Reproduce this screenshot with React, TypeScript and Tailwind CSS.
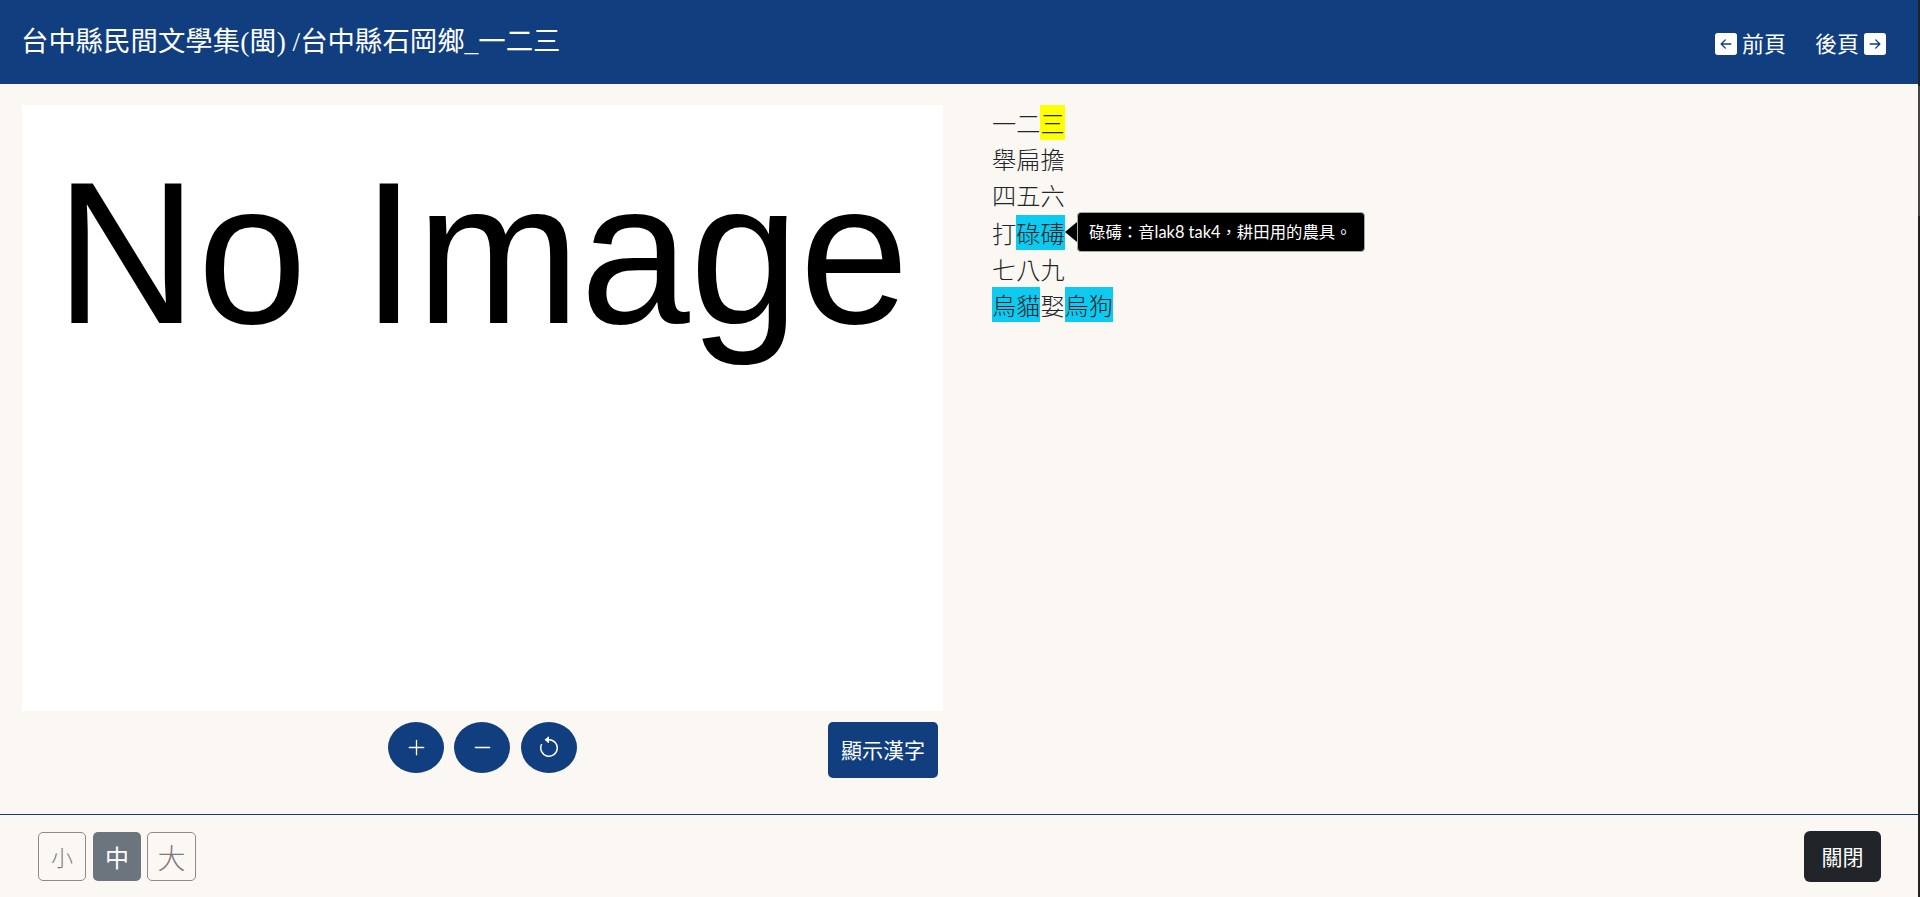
import { BsArrowCounterclockwise, BsArrowLeftSquareFill, BsArrowRightSquareFill, BsDashLg, BsPlusLg } from "react-icons/bs";

const lines = [
  [{ t: "一二" }, { t: "三", c: "bg-[#ffff00]" }],
  [{ t: "舉扁擔" }],
  [{ t: "四五六" }],
  [{ t: "打" }, { t: "碌碡", c: "bg-[#0dcaf0]" }],
  [{ t: "七八九" }],
  [{ t: "烏貓", c: "bg-[#0dcaf0]" }, { t: "娶" }, { t: "烏狗", c: "bg-[#0dcaf0]" }],
];

export default function App() {
  return (
    <div className="flex h-[897px] w-full overflow-hidden bg-[#fbf8f3] font-['Noto_Sans_CJK_TC',serif] text-[#212529]">
      <div className="flex min-w-0 flex-1 flex-col">
        {/* header */}
        <div className="flex h-[84px] shrink-0 items-center justify-between bg-[#113e7f] pl-[21px] pr-[32px] text-white">
          <h1 className="font-['Liberation_Serif','Noto_Sans_CJK_TC',serif] text-[27.4px] leading-[1.2] font-normal">
            台中縣民間文學集(閩) /台中縣石岡鄉_一二三
          </h1>
          <div className="flex items-center gap-[29px] pt-[4px] text-[22px] font-normal">
            <a className="flex items-center gap-[5px]">
              <BsArrowLeftSquareFill size={22} />
              <span className="pb-[3px]">前頁</span>
            </a>
            <a className="flex items-center gap-[5px]">
              <span className="pb-[3px]">後頁</span>
              <BsArrowRightSquareFill size={22} />
            </a>
          </div>
        </div>

        {/* body */}
        <div className="flex min-h-0 flex-1">
          <div className="ml-[22px] w-[921px] shrink-0 pt-[21px]">
            <div className="flex h-[606px] justify-center overflow-hidden bg-white pt-[46px]">
              <span className="scale-x-[0.97] whitespace-nowrap font-['Liberation_Sans',sans-serif] text-[203px] leading-none text-black">
                No Image
              </span>
            </div>
            <div className="mt-[11px] grid grid-cols-[1fr_auto_1fr] items-start">
              <div />
              <div className="flex gap-[10px]">
                <button className="flex h-[51px] w-[56px] items-center justify-center rounded-[50%] bg-[#113e7f] text-white">
                  <BsPlusLg size={21} />
                </button>
                <button className="flex h-[51px] w-[56px] items-center justify-center rounded-[50%] bg-[#113e7f] text-white">
                  <BsDashLg size={21} />
                </button>
                <button className="ml-[1px] flex h-[51px] w-[56px] items-center justify-center rounded-[50%] bg-[#113e7f] text-white">
                  <BsArrowCounterclockwise size={24} />
                </button>
              </div>
              <div className="flex justify-end pr-[5px]">
                <button className="h-[56px] w-[110px] rounded-[5px] bg-[#113e7f] text-[21px] font-normal text-white">顯示漢字</button>
              </div>
            </div>
          </div>

          <div className="ml-[49px] pt-[21px] text-[24.2px] leading-[36px] font-light">
            {lines.map((line, i) => (
              <div key={i} className={i === 3 ? "relative mt-[2px]" : ""}>
                {line.map((s, j) => (
                  <span key={j} className={s.c}>
                    {s.t}
                  </span>
                ))}
                {i === 3 && (
                  <div className="absolute left-[73px] top-[-3px] flex items-center">
                    <div className="h-0 w-0 border-y-[10px] border-r-[12px] border-y-transparent border-r-black" />
                    <div className="flex h-[40px] w-[288px] items-center rounded-[4px] border border-[#a8a8a8] bg-black pl-[11px] font-['Lato','Noto_Sans_CJK_TC',sans-serif] text-[16.4px] leading-none font-normal whitespace-nowrap text-white">
                      {"碌碡\uFF1A音lak8 tak4\uFF0C耕田用的農具。"}
                    </div>
                  </div>
                )}
              </div>
            ))}
          </div>
        </div>

        {/* footer */}
        <div className="flex h-[83px] shrink-0 items-start justify-between border-t border-[#0f3a78] pl-[38px] pr-[37px] pt-[16px]">
          <div className="flex gap-[7px] text-[#7d7a78]">
            <button className="mt-[1px] h-[49px] w-[48px] rounded-[5px] border border-[#8f8a88] text-[22px] font-light">小</button>
            <button className="mt-[1px] h-[49px] w-[48px] rounded-[5px] bg-[#6c757d] text-[24px] font-normal text-white">中</button>
            <button className="-ml-[1px] mt-[1px] h-[49px] w-[49px] rounded-[5px] border border-[#8f8a88] text-[28px] font-light">大</button>
          </div>
          <button className="h-[51px] w-[77px] rounded-[6px] bg-[#212529] text-[21px] font-normal text-white">關閉</button>
        </div>
      </div>

      {/* window edge */}
      <div className="flex w-[2px] shrink-0 flex-col bg-[#222222]">
        <div className="h-[86px] shrink-0" />
        <div className="h-[130px] shrink-0 bg-[#444444]" />
      </div>
    </div>
  );
}
